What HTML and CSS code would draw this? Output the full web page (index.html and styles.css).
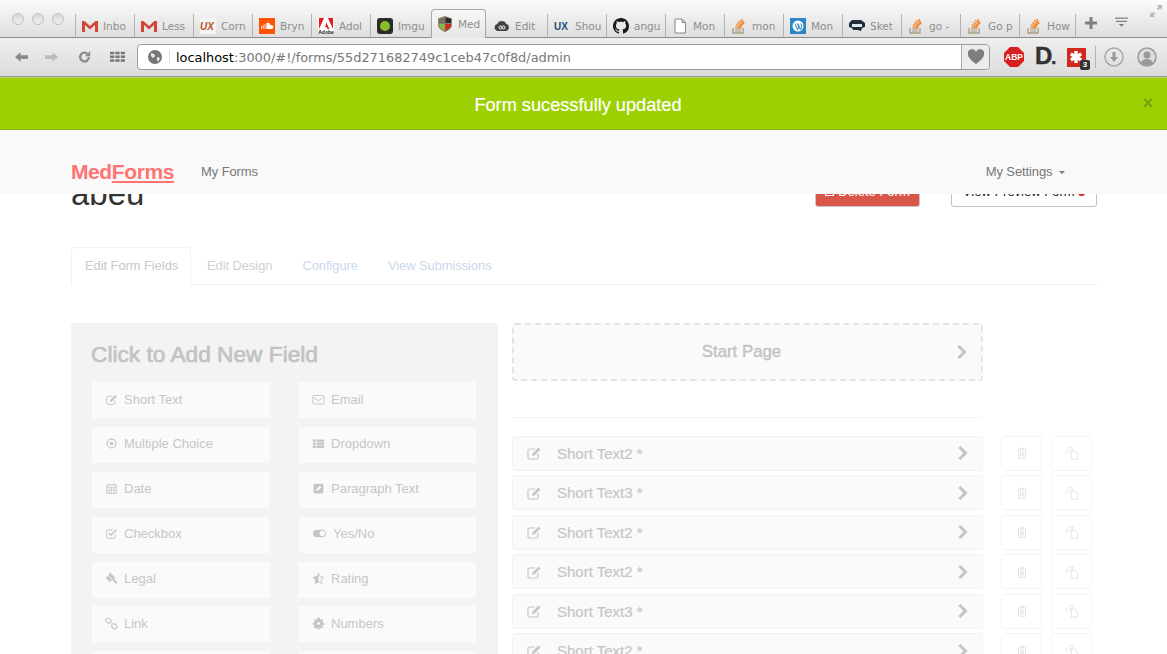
FILE: index.html
```html
<!DOCTYPE html>
<html lang="en">

<head>
    <meta charset="UTF-8">
    <title>MedForms</title>
    <link rel="stylesheet" href="styles.css">
</head>

<body>
    <svg class="sprite" xmlns="http://www.w3.org/2000/svg">
        <symbol id="i-gmail" viewBox="0 0 16 16"><path d="M0 3h2.5L8 8l5.500-5H16v11h-3V7L8 11.500 3 7v7H0z" fill="#d44638"/></symbol>
        <symbol id="i-cloud" viewBox="0 0 16 16"><path d="M4 13a3.500 3.500 0 0 1-.7-6.900A4.800 4.800 0 0 1 12.300 6 3.600 3.600 0 0 1 12 13z" fill="#444"/><circle cx="6.500" cy="9.500" r="1.500" fill="none" stroke="#fff"/><circle cx="9.500" cy="9.500" r="1.500" fill="none" stroke="#fff"/></symbol>
        <symbol id="i-github" viewBox="0 0 16 16"><path d="M8 0C3.580 0 0 3.580 0 8c0 3.540 2.290 6.530 5.470 7.590.4.070.55-.17.55-.38 0-.19-.01-.82-.01-1.490-2.010.37-2.530-.49-2.690-.94-.09-.23-.48-.94-.82-1.130-.28-.15-.68-.52-.01-.53.63-.01 1.080.58 1.230.82.72 1.210 1.870.87 2.330.66.070-.52.28-.87.51-1.070-1.780-.2-3.640-.89-3.640-3.950 0-.87.31-1.590.82-2.150-.08-.2-.36-1.020.08-2.120 0 0 .67-.21 2.200.82.64-.18 1.320-.27 2-.27.68 0 1.360.09 2 .27 1.530-1.040 2.200-.82 2.200-.82.44 1.100.16 1.920.08 2.120.51.56.82 1.270.82 2.150 0 3.070-1.870 3.750-3.650 3.950.29.25.54.73.54 1.480 0 1.070-.01 1.930-.01 2.200 0 .21.15.46.55.38A8.013 8.013 0 0 0 16 8c0-4.420-3.580-8-8-8z" fill="#1a1a1a"/></symbol>
        <symbol id="i-doc" viewBox="0 0 16 16"><path d="M3 1h7l3.500 3.500V15H3zM10 1v3.500h3.500" fill="#fff" stroke="#888"/></symbol>
        <symbol id="i-stack" viewBox="0 0 16 16"><path d="M2 10v5h10v-5" fill="none" stroke="#a89a80" stroke-width="1.300"/><path d="M4 11h6M4 13h6" stroke="#a89a80" stroke-width="1.200"/><path d="M4.300 8.800l6 1M5 6.500l5.700 2.200M6.300 4.300l5 3.300M8.300 2.300l4 4.300M10.700 1l2.400 5" stroke="#f48024" stroke-width="1.300"/></symbol>
        <symbol id="i-edit" viewBox="0 0 16 16"><path d="M12 9v3.500a1.500 1.500 0 0 1-1.500 1.500h-7A1.500 1.500 0 0 1 2 12.500v-7A1.500 1.500 0 0 1 3.500 4H9" fill="none" stroke="currentColor" stroke-width="1.200"/><path d="M6.500 8.500L12.500 2.500l2 2-6 6-2.500.5z" fill="currentColor"/></symbol>
        <symbol id="i-mail" viewBox="0 0 16 16"><rect x="1" y="3" width="14" height="10.500" rx="1.500" fill="none" stroke="currentColor" stroke-width="1.100"/><path d="M1.500 5l6.500 4.500L14.500 5" fill="none" stroke="currentColor" stroke-width="1.100"/></symbol>
        <symbol id="i-radio" viewBox="0 0 16 16"><circle cx="8" cy="8" r="5.500" fill="none" stroke="currentColor" stroke-width="1.500"/><circle cx="8" cy="8" r="2.200" fill="currentColor"/></symbol>
        <symbol id="i-list" viewBox="0 0 16 16"><path d="M1 3h3.500v2.800H1zM5.500 3H15v2.800H5.500zM1 6.800h3.500v2.800H1zM5.500 6.800H15v2.800H5.500zM1 10.600h3.500v2.800H1zM5.500 10.600H15v2.800H5.500z" fill="currentColor"/></symbol>
        <symbol id="i-date" viewBox="0 0 16 16"><path d="M2 3.500h12V14H2z" fill="none" stroke="currentColor" stroke-width="1.100"/><path d="M2 6.500h12M5 1.500v3M11 1.500v3M5 6.500V14M8 6.500V14M11 6.500V14M2 10h12" stroke="currentColor" stroke-width="1"/></symbol>
        <symbol id="i-para" viewBox="0 0 16 16"><path d="M3.500 2h9A1.500 1.500 0 0 1 14 3.500v9a1.500 1.500 0 0 1-1.500 1.500h-9A1.500 1.500 0 0 1 2 12.500v-9A1.500 1.500 0 0 1 3.500 2z" fill="currentColor"/><path d="M5 11l.5-2.500 4-4 2 2-4 4z" fill="#fafafa"/></symbol>
        <symbol id="i-check" viewBox="0 0 16 16"><path d="M12.500 9v3.500a1.500 1.500 0 0 1-1.500 1.500H3.500A1.500 1.500 0 0 1 2 12.500V5a1.500 1.500 0 0 1 1.500-1.500H10" fill="none" stroke="currentColor" stroke-width="1.200"/><path d="M4.800 7.500l2.500 2.500L14 3.500" fill="none" stroke="currentColor" stroke-width="1.800"/></symbol>
        <symbol id="i-toggle" viewBox="0 0 16 16"><rect x="0" y="3.500" width="16" height="9" rx="4.500" fill="currentColor"/><circle cx="11.500" cy="8" r="3.300" fill="#fafafa"/></symbol>
        <symbol id="i-legal" viewBox="0 0 16 16"><path d="M6.500 1l6 5.500-2.500 2.700L4 3.700zM1 7.500l3-3 5 5-3 2.700zM8.500 9.500l1.700-1.700 5.300 5-1.800 1.900z" fill="currentColor"/></symbol>
        <symbol id="i-star" viewBox="0 0 16 16"><path d="M8 1.500l2 4.300 4.700.6-3.400 3.200.9 4.700L8 12l-4.200 2.300.9-4.700L1.300 6.400 6 5.800z" fill="none" stroke="currentColor" stroke-width="1.200"/><path d="M8 1.500v10.500l-4.200 2.300.9-4.700L1.300 6.400 6 5.800z" fill="currentColor"/></symbol>
        <symbol id="i-link" viewBox="0 0 16 16"><rect x="1" y="1.800" width="7" height="5" rx="2.400" transform="rotate(40 4 4)" fill="none" stroke="currentColor" stroke-width="1.400"/><rect x="8" y="9" width="7" height="5" rx="2.400" transform="rotate(40 11.500 11.500)" fill="none" stroke="currentColor" stroke-width="1.400"/></symbol>
        <symbol id="i-gear" viewBox="0 0 16 16"><path d="M6.500 1h3l.5 2.500 2.300-1 1.700 2-1.500 2L15 7.500v2.500l-2.500.5 1 2.300-2 1.700-2-1.500-.5 2.500H6.500L6 13l-2.300 1-1.700-2 1.500-2L1 9.500V7l2.500-.5-1-2.300 2-1.700 1.500 1.500z" fill="currentColor"/><circle cx="8" cy="8" r="1.700" fill="#fafafa"/></symbol>
        <symbol id="i-trash" viewBox="0 0 16 16"><path d="M3 4.500h10M6 4.500V2.500h4v2M4 4.500v9.500h8V4.500M6.500 6.500V12M8 6.500V12M9.500 6.500V12" fill="none" stroke="currentColor"/></symbol>
        <symbol id="i-copy" viewBox="0 0 16 16"><path d="M1.500 9.500V5.500L5 2h4v3M9 5H6.500L5 6.500v1.500" fill="none" stroke="currentColor"/><path d="M7 6h4.500L14.500 9v6H7z" fill="none" stroke="currentColor"/></symbol>
        <symbol id="i-chevron" viewBox="0 0 12 16"><path d="M2.500 2l6 6-6 6" fill="none" stroke="currentColor" stroke-width="3"/></symbol>
    </svg>

    <div class="tabstrip">
        <div class="lights"><i></i><i></i><i></i></div>
        <div class="tab"><svg class="fav"><use href="#i-gmail"/></svg><span>Inbo</span></div>
        <div class="tab"><svg class="fav"><use href="#i-gmail"/></svg><span>Less</span></div>
        <div class="tab"><svg class="fav" viewBox="0 0 16 16"><rect width="16" height="16" fill="#f4f4f4"/><text x="0" y="11.500" class="ux ux-red">UX</text></svg><span>Corn</span></div>
        <div class="tab"><svg class="fav" viewBox="0 0 16 16"><rect width="16" height="16" fill="#f50"/><path d="M2 11V8h.8v3zM3.800 11V7h.8v4zM5.600 11V6h.8v5zM7.400 11V5a3 3 0 0 1 4.200 2.200A2 2 0 1 1 12 11z" fill="#fff"/></svg><span>Bryn</span></div>
        <div class="tab"><svg class="fav" viewBox="0 0 16 16"><rect width="16" height="16" fill="#fff"/><path d="M1 0h5L1 11zM10 0h5v11zM8 4l3.500 7H9.500l-.8-2H6.700L8 7z" fill="#e21b1b"/><text x="8" y="15.500" class="adobe">Adobe</text></svg><span>Adol</span></div>
        <div class="tab"><svg class="fav" viewBox="0 0 16 16"><rect width="16" height="16" rx="3" fill="#2b2b2b"/><circle cx="8" cy="8" r="5" fill="#85bf25"/></svg><span>Imgu</span></div>
        <div class="tab tab-active"><svg class="fav" viewBox="0 0 16 16"><path d="M1 2.500L8 0l7 2.500V9c0 3-3.500 5.500-7 7-3.500-1.500-7-4-7-7z" fill="#8a7f6c"/><path d="M8 1v6.500H2V3z" fill="#7a6f5c"/><path d="M2 8h5.500v6.800C5 13.500 2 11.500 2 9z" fill="#8cb63c"/><path d="M8.500 8H14v1c0 2.500-3 4.500-5.500 5.800z" fill="#d3281c"/><path d="M8.500 1.200L14 3v4H8.500z" fill="#2a2a2a"/></svg><span>Med</span></div>
        <div class="tab tab-next"><svg class="fav"><use href="#i-cloud"/></svg><span>Edit</span></div>
        <div class="tab"><svg class="fav" viewBox="0 0 16 16"><text x="0" y="11.500" class="ux ux-blue">UX</text></svg><span>Shou</span></div>
        <div class="tab"><svg class="fav"><use href="#i-github"/></svg><span>angu</span></div>
        <div class="tab"><svg class="fav"><use href="#i-doc"/></svg><span>Mon</span></div>
        <div class="tab"><svg class="fav"><use href="#i-stack"/></svg><span>mon</span></div>
        <div class="tab"><svg class="fav" viewBox="0 0 16 16"><rect width="16" height="16" fill="#2a86c5"/><circle cx="8" cy="8" r="5.500" fill="#fff"/><path d="M5 5.500l2.500 6.500 1-3-1-3.500M8 5.500l2.500 6.500 1.300-4-.8-2.500" fill="none" stroke="#2a86c5"/></svg><span>Mon</span></div>
        <div class="tab"><svg class="fav" viewBox="0 0 16 16"><path d="M0 5l3-3h9l4 3v4l-3 1-1 3-3-1H4l-1-2-3-1z" fill="#1f2d3a"/><rect x="3" y="6" width="10" height="3" fill="#dfe6ec"/></svg><span>Sket</span></div>
        <div class="tab"><svg class="fav"><use href="#i-stack"/></svg><span>go -</span></div>
        <div class="tab"><svg class="fav"><use href="#i-stack"/></svg><span>Go p</span></div>
        <div class="tab tab-last"><svg class="fav"><use href="#i-stack"/></svg><span>How</span></div>
        <svg class="strip-icon strip-plus" viewBox="0 0 12 12"><path d="M4.500 0h3v4.500H12v3H7.500V12h-3V7.500H0v-3h4.500z"/></svg>
        <svg class="strip-icon strip-menu" viewBox="0 0 14 12"><path d="M0 0h14v1.500H0zM1 3.500h12V5H1zM4 7h6l-3 3z"/></svg>
        <svg class="strip-expand" viewBox="0 0 14 14"><path d="M8 1h5v5l-1.700-1.700-2 2-1.600-1.600 2-2zM6 13H1V8l1.700 1.700 2-2 1.600 1.600-2 2z"/></svg>
    </div>

    <div class="toolbar">
        <svg class="tool" viewBox="0 0 16 14"><path d="M1 7l6-5v3h8v4H7v3z" fill="#8b8b8b"/></svg>
        <svg class="tool tool-gap" viewBox="0 0 16 14"><path d="M15 7L9 2v3H1v4h8v3z" fill="#bbb"/></svg>
        <svg class="tool tool-wide" viewBox="0 0 16 16"><path d="M13 8a5 5 0 1 1-1.500-3.500" fill="none" stroke="#8b8b8b" stroke-width="2.600"/><path d="M14.500 1v6h-6z" fill="#8b8b8b"/></svg>
        <svg class="tool tool-wide" viewBox="0 0 14 12"><path d="M0 1h4v2.500H0zM5 1h4v2.500H5zM10 1h4v2.500h-4zM0 4.500h4V7H0zM5 4.500h4V7H5zM10 4.500h4V7h-4zM0 8h4v2.500H0zM5 8h4v2.500H5zM10 8h4v2.500h-4z" fill="#777"/></svg>
        <div class="addressbar">
            <svg class="globe" viewBox="0 0 14 14"><circle cx="7" cy="7" r="7" fill="#777"/><path d="M3 3l3 1 1 2-2 2-2-2zM9 7l3 1-2 4-1-2z" fill="#eee"/></svg>
            <div class="url"><b>localhost</b>:3000/#!/forms/55d271682749c1ceb47c0f8d/admin</div>
            <div class="heart"><svg viewBox="0 0 20 18"><path d="M10 17C4 12 1 9.500 1 5.500A4.500 4.500 0 0 1 10 4a4.500 4.500 0 0 1 9 1.500C19 9.500 16 12 10 17z" fill="#7d7d7d"/></svg></div>
        </div>
        <svg class="ext-abp" viewBox="0 0 20 20"><path d="M6 0h8l6 6v8l-6 6H6l-6-6V6z" fill="#d81f1f"/><text x="10" y="13" class="abp">ABP</text></svg>
        <span class="ext-d">D<i>.</i></span>
        <div class="ext-lastpass"><svg viewBox="0 0 19 19"><path d="M9 3v12M3.800 6l10.400 6M14.200 6L3.800 12" stroke="#fff" stroke-width="3.400"/></svg><em>3</em></div>
        <div class="tool-sep"></div>
        <svg class="round-icon" viewBox="0 0 20 20"><circle cx="10" cy="10" r="9" fill="none" stroke="#aaa" stroke-width="1.500"/><path d="M8.500 5h3v5h2.500L10 15l-4-5h2.500z" fill="#999"/></svg>
        <svg class="round-icon round-user" viewBox="0 0 20 20"><circle cx="10" cy="10" r="9" fill="#ddd" stroke="#999" stroke-width="1.500"/><circle cx="10" cy="8" r="3.500" fill="#999"/><path d="M4 16c1-3 3-4 6-4s5 1 6 4a9 9 0 0 1-12 0z" fill="#999"/></svg>
    </div>

    <div class="alert">
        <span class="alert-text">Form sucessfully updated</span>
        <span class="alert-close">×</span>
    </div>

    <div class="page">
        <nav class="navbar">
            <a class="brand">Med<u>Forms</u></a>
            <a class="nav-link">My Forms</a>
            <a class="nav-link nav-right">My Settings <i class="caret"></i></a>
        </nav>

        <div class="form-header">
            <h1>abeu</h1>
            <button class="btn btn-delete"><i class="box"></i>Delete Form</button>
            <button class="btn btn-preview">View Preview Form <i class="dot"></i></button>
        </div>

        <ul class="tabs">
            <li class="active">Edit Form Fields</li>
            <li>Edit Design</li>
            <li class="blue">Configure</li>
            <li class="blue">View Submissions</li>
        </ul>

        <div class="editor">
            <section class="add-panel">
                <h2>Click to Add New Field</h2>
                <div class="add-grid">
                    <div class="add-item"><svg><use href="#i-edit"/></svg>Short Text</div>
                    <div class="add-item"><svg><use href="#i-mail"/></svg>Email</div>
                    <div class="add-item"><svg><use href="#i-radio"/></svg>Multiple Choice</div>
                    <div class="add-item"><svg><use href="#i-list"/></svg>Dropdown</div>
                    <div class="add-item"><svg><use href="#i-date"/></svg>Date</div>
                    <div class="add-item"><svg><use href="#i-para"/></svg>Paragraph Text</div>
                    <div class="add-item"><svg><use href="#i-check"/></svg>Checkbox</div>
                    <div class="add-item"><svg class="wide-icon"><use href="#i-toggle"/></svg>Yes/No</div>
                    <div class="add-item"><svg><use href="#i-legal"/></svg>Legal</div>
                    <div class="add-item"><svg><use href="#i-star"/></svg>Rating</div>
                    <div class="add-item"><svg><use href="#i-link"/></svg>Link</div>
                    <div class="add-item"><svg><use href="#i-gear"/></svg>Numbers</div>
                    <div class="add-item"></div>
                    <div class="add-item"></div>
                </div>
            </section>

            <section class="fields">
                <div class="start-page">Start Page<svg class="chevron"><use href="#i-chevron"/></svg></div>
                <hr>
                <div class="field-row"><div class="field"><svg class="field-icon"><use href="#i-edit"/></svg>Short Text2 *<svg class="chevron"><use href="#i-chevron"/></svg></div><div class="act"><svg><use href="#i-trash"/></svg></div><div class="act"><svg><use href="#i-copy"/></svg></div></div>
                <div class="field-row"><div class="field"><svg class="field-icon"><use href="#i-edit"/></svg>Short Text3 *<svg class="chevron"><use href="#i-chevron"/></svg></div><div class="act"><svg><use href="#i-trash"/></svg></div><div class="act"><svg><use href="#i-copy"/></svg></div></div>
                <div class="field-row"><div class="field"><svg class="field-icon"><use href="#i-edit"/></svg>Short Text2 *<svg class="chevron"><use href="#i-chevron"/></svg></div><div class="act"><svg><use href="#i-trash"/></svg></div><div class="act"><svg><use href="#i-copy"/></svg></div></div>
                <div class="field-row"><div class="field"><svg class="field-icon"><use href="#i-edit"/></svg>Short Text2 *<svg class="chevron"><use href="#i-chevron"/></svg></div><div class="act"><svg><use href="#i-trash"/></svg></div><div class="act"><svg><use href="#i-copy"/></svg></div></div>
                <div class="field-row"><div class="field"><svg class="field-icon"><use href="#i-edit"/></svg>Short Text3 *<svg class="chevron"><use href="#i-chevron"/></svg></div><div class="act"><svg><use href="#i-trash"/></svg></div><div class="act"><svg><use href="#i-copy"/></svg></div></div>
                <div class="field-row"><div class="field"><svg class="field-icon"><use href="#i-edit"/></svg>Short Text2 *<svg class="chevron"><use href="#i-chevron"/></svg></div><div class="act"><svg><use href="#i-trash"/></svg></div><div class="act"><svg><use href="#i-copy"/></svg></div></div>
            </section>
        </div>
    </div>
</body>

</html>
```

FILE: styles.css
```css
html,
body {
    margin: 0;
    padding: 0;
    height: 100%;
    overflow: hidden;
}

body {
    font-family: "Liberation Sans", Arial, sans-serif;
    background: white;
    display: flex;
    flex-direction: column;
}

.sprite {
    display: none;
}

/* browser chrome */
.tabstrip {
    position: relative;
    display: flex;
    flex: none;
    height: 37px;
    padding-left: 75px;
    background: linear-gradient(#fbfbfb, #dedede);
    border-bottom: 1px solid #8c8c8c;
}

.lights {
    position: absolute;
    top: 13px;
    left: 12px;
    display: flex;
    gap: 8px;
}

.lights i {
    width: 10px;
    height: 10px;
    border: 1px solid #bdbdbd;
    border-radius: 50%;
    background: linear-gradient(#d8d8d8, #eee);
}

.tab {
    display: flex;
    align-items: center;
    gap: 5px;
    width: 59px;
    height: 23px;
    margin-top: 14px;
    padding-left: 6px;
    box-sizing: border-box;
    border-left: 1px solid #b3b3b3;
    color: #8e8e8e;
    font-family: "DejaVu Sans", sans-serif;
    font-size: 10.5px;
    white-space: nowrap;
}

.tab span {
    flex: none;
    width: 29px;
}

.tab-active {
    width: 55px;
    height: 29px;
    margin: 9px 2px -1px 2px;
    padding: 0 0 0 5px;
    background: linear-gradient(#f7f7f7, #e6e6e6);
    border: 1px solid #a8a8a8;
    border-bottom: none;
    border-radius: 4px 4px 0 0;
    z-index: 1;
}

.tab-next {
    border-left: none;
}

.tab-last {
    width: 57px;
    border-right: 1px solid #b3b3b3;
}

.fav {
    flex: none;
    width: 16px;
    height: 16px;
}

.ux {
    font-family: "Liberation Sans", sans-serif;
    font-size: 10px;
    font-weight: bold;
}

.ux-red {
    fill: #b8522a;
    font-style: italic;
}

.ux-blue {
    fill: #2a4a7c;
}

.adobe {
    fill: #111;
    font-family: "Liberation Sans", sans-serif;
    font-size: 5px;
    font-weight: bold;
    text-anchor: middle;
}

.strip-icon {
    flex: none;
    margin-top: 17px;
    fill: #808080;
}

.strip-plus {
    width: 12px;
    height: 12px;
    margin-left: 9px;
}

.strip-menu {
    width: 13px;
    height: 12px;
    margin-left: 18px;
}

.strip-expand {
    position: absolute;
    top: 4px;
    right: 4px;
    width: 14px;
    height: 14px;
    fill: #b5b9bd;
}

.toolbar {
    display: flex;
    flex: none;
    align-items: center;
    height: 38px;
    padding-left: 14px;
    background: linear-gradient(#efefef, #dcdcdc);
    border-bottom: 1px solid #9a9a9a;
}

.tool {
    flex: none;
    width: 15px;
    height: 14px;
}

.tool-gap {
    margin-left: 15px;
}

.tool-wide {
    margin-left: 18px;
}

.addressbar {
    display: flex;
    flex: none;
    align-items: center;
    width: 851px;
    height: 24px;
    margin: 0 14px 0 12px;
    background: white;
    border: 1px solid #9c9c9c;
    border-radius: 4px;
}

.globe {
    width: 14px;
    height: 14px;
    margin-left: 10px;
    padding-right: 7px;
    border-right: 1px solid #ddd;
}

.url {
    flex: 1;
    margin-left: 6px;
    color: #777;
    font-family: "DejaVu Sans", sans-serif;
    font-size: 12.9px;
    white-space: nowrap;
}

.url b {
    color: black;
    font-weight: normal;
}

.heart {
    display: flex;
    align-items: center;
    justify-content: center;
    width: 27px;
    height: 100%;
    background: #ececec;
    border-left: 1px solid #a8a8a8;
    border-radius: 0 4px 4px 0;
}

.heart svg {
    width: 18px;
    height: 16px;
}

.ext-abp {
    width: 20px;
    height: 20px;
}

.abp {
    fill: white;
    font-family: "Liberation Sans", sans-serif;
    font-size: 8.5px;
    font-weight: bold;
    text-anchor: middle;
}

.ext-d {
    width: 21px;
    margin-left: 11px;
    color: #333;
    font-size: 24px;
    font-weight: bold;
    line-height: 20px;
    letter-spacing: -1px;
    -webkit-text-stroke: 0.5px #333;
}

.ext-d i {
    font-style: normal;
    font-size: 18px;
}

.ext-lastpass {
    position: relative;
    width: 19px;
    height: 19px;
    margin-left: 11px;
    background: #cf2a20;
    color: white;
}

.ext-lastpass svg {
    display: block;
    width: 19px;
    height: 19px;
}

.ext-lastpass em {
    position: absolute;
    right: -4px;
    bottom: -3px;
    width: 10px;
    height: 10px;
    background: #333;
    border-radius: 2px;
    font-size: 8px;
    font-style: normal;
    font-weight: bold;
    line-height: 10px;
    text-align: center;
}

.tool-sep {
    width: 1px;
    height: 22px;
    margin-left: 9px;
    background: #b5b5b5;
}

.round-icon {
    width: 20px;
    height: 20px;
    margin-left: 8px;
}

.round-user {
    margin-left: 13px;
}

/* green message bar */
.alert {
    position: relative;
    flex: none;
    height: 53px;
    padding-right: 11px;
    background: #9dd000;
    border-top: 1px solid #b8d86a;
    border-bottom: 1px solid #8fb70f;
    box-sizing: border-box;
    color: white;
    font-size: 18.2px;
    line-height: 54px;
    text-align: center;
    -webkit-text-stroke: 0.2px white;
}

.alert-close {
    position: absolute;
    top: -2px;
    right: 14px;
    color: #7c9f14;
    -webkit-text-stroke: 0;
    font-size: 18px;
    font-weight: bold;
}

/* app */
.page {
    position: relative;
    flex: 1;
    overflow: hidden;
    padding: 0 70px 0 71px;
}

.navbar {
    position: absolute;
    top: 0;
    left: 0;
    right: 0;
    z-index: 10;
    display: flex;
    align-items: center;
    height: 64px;
    padding: 19px 102px 0 71px;
    box-sizing: border-box;
    background: #f9f9f9;
}

.brand {
    color: #ff7373;
    font-size: 21px;
    font-weight: bold;
    letter-spacing: -0.4px;
}

.brand u {
    text-decoration-thickness: 2px;
    text-underline-offset: 2px;
}

.nav-link {
    margin-left: 27px;
    color: #777;
    font-size: 13px;
    letter-spacing: -0.1px;
}

.nav-right {
    margin-left: auto;
}

.caret {
    display: inline-block;
    margin-left: 3px;
    vertical-align: middle;
    border-top: 3px solid #777;
    border-left: 3px solid transparent;
    border-right: 3px solid transparent;
}

.form-header {
    display: flex;
    align-items: flex-end;
    height: 77px;
}

.form-header h1 {
    margin: 0 auto -9px 0;
    color: #333;
    font-size: 33px;
    font-weight: normal;
    line-height: 44px;
}

.btn {
    height: 37px;
    padding: 6px 0 0;
    border-radius: 3px;
    font-family: "Liberation Sans", sans-serif;
    font-size: 13px;
}

.btn-delete {
    width: 105px;
    margin-right: 31px;
    background: #d9574a;
    border: 1px solid #c9c9c9;
    color: white;
}

.box {
    display: inline-block;
    width: 7px;
    height: 8px;
    margin-right: 4px;
    border: 1px solid white;
}

.btn-preview {
    width: 146px;
    background: white;
    border: 1px solid #c4c4c4;
    color: #222;
}

.dot {
    display: inline-block;
    width: 7px;
    height: 7px;
    border-radius: 50%;
    background: #d3281c;
}

.tabs {
    display: flex;
    height: 37px;
    margin: 40px 0 0;
    padding: 0;
    list-style: none;
    border-bottom: 1px solid #f2f2f2;
    color: #d0d0d0;
    font-size: 12.8px;
}

.tabs li {
    padding: 0 15px;
    line-height: 37px;
}

.tabs li.active {
    width: 120px;
    height: 38px;
    margin-right: 1px;
    padding: 0 0 0 13px;
    box-sizing: border-box;
    background: white;
    border: 1px solid #f2f2f2;
    border-bottom: none;
    border-radius: 3px 3px 0 0;
    color: #c9c9c9;
    line-height: 35px;
    white-space: nowrap;
}

.tabs li.blue {
    color: #c9d9ec;
}

.editor {
    display: flex;
    align-items: flex-start;
    gap: 14px;
    margin-top: 38px;
}

.add-panel {
    flex: none;
    width: 427px;
    padding: 18px 21px 30px;
    box-sizing: border-box;
    background: #f3f3f3;
    border-radius: 2px;
}

.add-panel h2 {
    margin: 0 0 15px -1px;
    color: #c2c2c2;
    font-size: 22.7px;
    font-weight: normal;
    line-height: 26px;
    -webkit-text-stroke: 0.7px #c2c2c2;
}

.add-grid {
    display: grid;
    grid-template-columns: 178px 177px;
    grid-auto-rows: 36px;
    column-gap: 29px;
    row-gap: 8.9px;
}

.add-item {
    display: flex;
    align-items: center;
    gap: 6px;
    padding: 0 0 2px 13px;
    background: #fafafa;
    color: #c6c6c6;
    font-size: 13px;
}

.add-item svg {
    width: 13px;
    height: 13px;
    color: #c6c6c6;
}

.add-item .wide-icon {
    width: 15px;
}

.fields {
    flex: none;
    width: 580px;
}

.start-page {
    position: relative;
    width: 471px;
    height: 58px;
    padding-right: 12px;
    box-sizing: border-box;
    background: #fafafa;
    border: 2px dashed #e4e4e4;
    border-radius: 3px;
    color: #c2c2c2;
    font-size: 16.8px;
    line-height: 54px;
    text-align: center;
    -webkit-text-stroke: 0.4px #c2c2c2;
}

.start-page .chevron {
    position: absolute;
    top: 19px;
    right: 13px;
}

.chevron {
    width: 12px;
    height: 16px;
    color: #c4c4c4;
}

.fields hr {
    width: 471px;
    margin: 36px 0 17.7px;
    border: none;
    border-top: 1px solid #f5f5f5;
}

.field-row {
    display: flex;
    gap: 9px;
    height: 35px;
    margin-bottom: 4.5px;
}

.field {
    display: flex;
    align-items: center;
    width: 471px;
    margin-right: 9px;
    padding: 0 13px;
    box-sizing: border-box;
    background: #fafafa;
    border: 1px solid #f2f2f2;
    border-radius: 3px;
    color: #c6c6c6;
    font-size: 15px;
    -webkit-text-stroke: 0.2px #c6c6c6;
}

.field-icon {
    width: 16px;
    height: 16px;
    margin-right: 15px;
}

.field .chevron {
    margin-left: auto;
}

.act {
    display: flex;
    align-items: center;
    justify-content: center;
    width: 41px;
    box-sizing: border-box;
    border: 1px solid #f4f4f4;
    border-radius: 3px;
    color: #e0e0e0;
}

.act svg {
    width: 14px;
    height: 14px;
}
```
